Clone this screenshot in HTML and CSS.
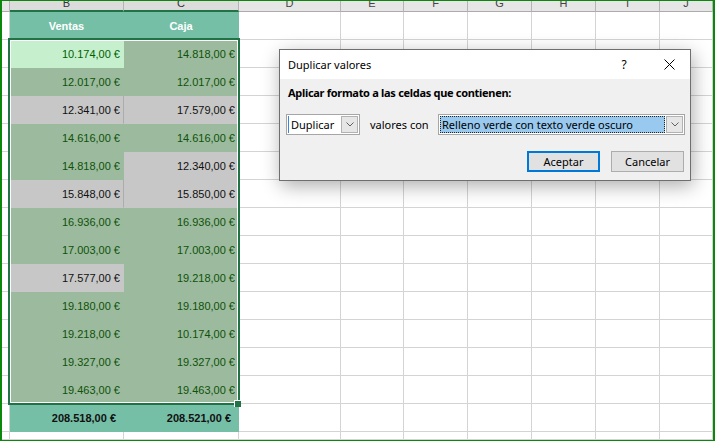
FILE: index.html
```html
<!DOCTYPE html>
<html lang="es">
<head>
<meta charset="utf-8">
<title>Duplicar valores</title>
<link rel="stylesheet" href="styles.css">
</head>
<body>
<div class="frame">
  <div class="sheet">
    <div class="row hdr">
      <div class="h"></div><div class="h hs"><span>B</span></div><div class="h hs"><span>C</span></div><div class="h"><span>D</span></div><div class="h"><span>E</span></div><div class="h"><span>F</span></div><div class="h"><span>G</span></div><div class="h"><span>H</span></div><div class="h"><span>I</span></div><div class="h"><span>J</span></div>
    </div>
    <div class="row">
      <div class="c"></div><div class="c f teal th">Ventas</div><div class="c f teal th">Caja</div><div class="c"></div><div class="c"></div><div class="c"></div><div class="c"></div><div class="c"></div><div class="c"></div><div class="c"></div>
    </div>
    <div class="row">
      <div class="c"></div><div class="c f act n">10.174,00 €</div><div class="c f dup n">14.818,00 €</div><div class="c"></div><div class="c"></div><div class="c"></div><div class="c"></div><div class="c"></div><div class="c"></div><div class="c"></div>
    </div>
    <div class="row">
      <div class="c"></div><div class="c f dup n">12.017,00 €</div><div class="c f dup n">12.017,00 €</div><div class="c"></div><div class="c"></div><div class="c"></div><div class="c"></div><div class="c"></div><div class="c"></div><div class="c"></div>
    </div>
    <div class="row">
      <div class="c"></div><div class="c f uni n gl">12.341,00 €</div><div class="c f uni n">17.579,00 €</div><div class="c"></div><div class="c"></div><div class="c"></div><div class="c"></div><div class="c"></div><div class="c"></div><div class="c"></div>
    </div>
    <div class="row">
      <div class="c"></div><div class="c f dup n">14.616,00 €</div><div class="c f dup n">14.616,00 €</div><div class="c"></div><div class="c"></div><div class="c"></div><div class="c"></div><div class="c"></div><div class="c"></div><div class="c"></div>
    </div>
    <div class="row">
      <div class="c"></div><div class="c f dup n">14.818,00 €</div><div class="c f uni n">12.340,00 €</div><div class="c"></div><div class="c"></div><div class="c"></div><div class="c"></div><div class="c"></div><div class="c"></div><div class="c"></div>
    </div>
    <div class="row">
      <div class="c"></div><div class="c f uni n gl">15.848,00 €</div><div class="c f uni n">15.850,00 €</div><div class="c"></div><div class="c"></div><div class="c"></div><div class="c"></div><div class="c"></div><div class="c"></div><div class="c"></div>
    </div>
    <div class="row">
      <div class="c"></div><div class="c f dup n">16.936,00 €</div><div class="c f dup n">16.936,00 €</div><div class="c"></div><div class="c"></div><div class="c"></div><div class="c"></div><div class="c"></div><div class="c"></div><div class="c"></div>
    </div>
    <div class="row">
      <div class="c"></div><div class="c f dup n">17.003,00 €</div><div class="c f dup n">17.003,00 €</div><div class="c"></div><div class="c"></div><div class="c"></div><div class="c"></div><div class="c"></div><div class="c"></div><div class="c"></div>
    </div>
    <div class="row">
      <div class="c"></div><div class="c f uni n">17.577,00 €</div><div class="c f dup n">19.218,00 €</div><div class="c"></div><div class="c"></div><div class="c"></div><div class="c"></div><div class="c"></div><div class="c"></div><div class="c"></div>
    </div>
    <div class="row">
      <div class="c"></div><div class="c f dup n">19.180,00 €</div><div class="c f dup n">19.180,00 €</div><div class="c"></div><div class="c"></div><div class="c"></div><div class="c"></div><div class="c"></div><div class="c"></div><div class="c"></div>
    </div>
    <div class="row">
      <div class="c"></div><div class="c f dup n">19.218,00 €</div><div class="c f dup n">10.174,00 €</div><div class="c"></div><div class="c"></div><div class="c"></div><div class="c"></div><div class="c"></div><div class="c"></div><div class="c"></div>
    </div>
    <div class="row">
      <div class="c"></div><div class="c f dup n">19.327,00 €</div><div class="c f dup n">19.327,00 €</div><div class="c"></div><div class="c"></div><div class="c"></div><div class="c"></div><div class="c"></div><div class="c"></div><div class="c"></div>
    </div>
    <div class="row">
      <div class="c"></div><div class="c f dup n">19.463,00 €</div><div class="c f dup n">19.463,00 €</div><div class="c"></div><div class="c"></div><div class="c"></div><div class="c"></div><div class="c"></div><div class="c"></div><div class="c"></div>
    </div>
    <div class="row">
      <div class="c"></div><div class="c f teal tot">208.518,00 €</div><div class="c f teal tot">208.521,00 €</div><div class="c"></div><div class="c"></div><div class="c"></div><div class="c"></div><div class="c"></div><div class="c"></div><div class="c"></div>
    </div>
    <div class="row last">
      <div class="c"></div><div class="c"></div><div class="c"></div><div class="c"></div><div class="c"></div><div class="c"></div><div class="c"></div><div class="c"></div><div class="c"></div><div class="c"></div>
    </div>

    <div class="sel"></div>
    <div class="handle"></div>

    <div class="dlg">
      <div class="titlebar">
        <div class="title">Duplicar valores</div>
        <div class="tbtn help">?</div>
        <div class="tbtn close"><svg width="11" height="11" viewBox="0 0 11 11"><path d="M0.5 0.5L10.5 10.5M10.5 0.5L0.5 10.5" stroke="#000" stroke-width="1" fill="none"/></svg></div>
      </div>
      <div class="dbody">
        <div class="lbl">Aplicar formato a las celdas que contienen:</div>
        <div class="controls">
          <div class="combo c1">
            <div class="ctext"><span class="caret"></span>Duplicar</div>
            <div class="arrow"><svg width="8" height="5" viewBox="0 0 8 5"><path d="M0.5 0.5L4 4L7.5 0.5" fill="none" stroke="#606060"/></svg></div>
          </div>
          <div class="mid">valores con</div>
          <div class="combo c2">
            <div class="ctext hl">Relleno verde con texto verde oscuro</div>
            <div class="arrow"><svg width="8" height="5" viewBox="0 0 8 5"><path d="M0.5 0.5L4 4L7.5 0.5" fill="none" stroke="#606060"/></svg></div>
          </div>
        </div>
        <div class="buttons">
          <div class="btn def">Aceptar</div>
          <div class="btn">Cancelar</div>
        </div>
      </div>
    </div>
  </div>
</div>
</body>
</html>
```

FILE: styles.css
```css
html, body {
  margin: 0;
  padding: 0;
}
body {
  width: 715px;
  height: 441px;
  overflow: hidden;
  background: #fff;
}
.frame {
  box-sizing: border-box;
  width: 715px;
  height: 441px;
  border-style: solid;
  border-color: #0b870b;
  border-width: 1px 2px 1px 2px;
}
.sheet {
  position: relative;
  height: 100%;
  overflow: hidden;
  font-family: "Liberation Sans", Arial, sans-serif;
  font-size: 11px;
  color: #000;
}
.row {
  display: grid;
  grid-template-columns: 8px 114px 115px 102px 63px 64px 64px 64px 64px 1fr;
  height: 28px;
}
.row.hdr {
  height: 11px;
}
.row.last {
  height: 8px;
}
.h {
  box-sizing: border-box;
  background: #e6e6e6;
  border-right: 1px solid #b4b4b4;
  border-bottom: 1px solid #ababab;
  overflow: hidden;
  text-align: center;
  line-height: 5px;
  color: #444;
}
.h.hs {
  background: #dcdcdc;
  border-bottom: 2px solid #217346;
  color: #333;
}
.c {
  box-sizing: border-box;
  border-right: 1px solid #d4d4d4;
  border-bottom: 1px solid #d4d4d4;
  min-width: 0;
}
.c.f {
  border-color: transparent;
}
.teal {
  background: #75bfa7;
}
.th {
  display: flex;
  align-items: center;
  justify-content: center;
  color: #fff;
  font-weight: bold;
}
.n {
  display: flex;
  align-items: center;
  justify-content: flex-end;
  padding-right: 3px;
  padding-top: 1px;
}
.act {
  background: #c6efce;
  color: #006100;
}
.dup {
  background: #9cba9e;
  color: #0f5209;
}
.uni {
  background: #c7c7c7;
  color: #111;
}
.uni.gl {
  border-right-color: #acacac;
}
.tot {
  display: flex;
  align-items: center;
  justify-content: flex-end;
  padding-right: 7px;
  font-weight: bold;
  color: #111;
}
.sel {
  position: absolute;
  left: 6px;
  top: 37px;
  width: 232px;
  height: 367px;
  box-sizing: border-box;
  border: 2px solid #217346;
  box-shadow: inset 0 0 0 1px #fff;
}
.handle {
  position: absolute;
  left: 232px;
  top: 399px;
  width: 7px;
  height: 7px;
  box-sizing: border-box;
  background: #217346;
  border-left: 1px solid #fff;
  border-top: 1px solid #fff;
}
.dlg {
  position: absolute;
  left: 277px;
  top: 48px;
  width: 412px;
  height: 132px;
  box-sizing: border-box;
  border: 1px solid #6f6f6f;
  background: #f0f0f0;
  box-shadow: 2px 5px 18px rgba(0, 0, 0, 0.32);
  display: flex;
  flex-direction: column;
  font-family: "Noto Sans", "Open Sans", sans-serif;
  font-size: 11px;
  color: #000;
}
.titlebar {
  height: 29px;
  background: #fff;
  display: flex;
  align-items: center;
  padding-left: 8px;
}
.title {
  flex: 1;
}
.tbtn {
  height: 29px;
  display: flex;
  align-items: center;
  justify-content: center;
}
.help {
  width: 48px;
  font-size: 12px;
}
.close {
  width: 42px;
}
.dbody {
  flex: 1;
  padding: 6px 5px 0 6px;
}
.lbl {
  font-weight: bold;
  line-height: 15px;
  margin-left: 2px;
  letter-spacing: -0.3px;
}
.controls {
  margin-top: 14px;
  height: 21px;
  display: flex;
  align-items: stretch;
}
.combo {
  box-sizing: border-box;
  border: 1px solid #a6a6a6;
  background: #fff;
  display: flex;
  padding: 1px;
}
.c1 {
  width: 74px;
}
.c2 {
  width: 247px;
  margin-left: auto;
}
.ctext {
  flex: 1;
  display: flex;
  align-items: center;
  white-space: nowrap;
  overflow: hidden;
}
.caret {
  width: 1px;
  align-self: stretch;
  background: #3b86d8;
  margin-right: 2px;
}
.hl {
  box-sizing: border-box;
  background: #99c9ef;
  border: 1px dotted #222;
  padding-left: 1px;
  margin-right: 1px;
}
.arrow {
  box-sizing: border-box;
  width: 17px;
  border: 1px solid #b2b2b2;
  background: #e6e6e6;
  display: flex;
  align-items: center;
  justify-content: center;
}
.mid {
  display: flex;
  align-items: center;
  margin-left: 10px;
}
.buttons {
  margin-top: 16px;
  margin-right: 1px;
  display: flex;
  justify-content: flex-end;
  gap: 11px;
}
.btn {
  box-sizing: border-box;
  width: 73px;
  height: 21px;
  border: 1px solid #adadad;
  background: #e1e1e1;
  display: flex;
  align-items: center;
  justify-content: center;
}
.btn.def {
  border: 2px solid #0078d7;
}
```
